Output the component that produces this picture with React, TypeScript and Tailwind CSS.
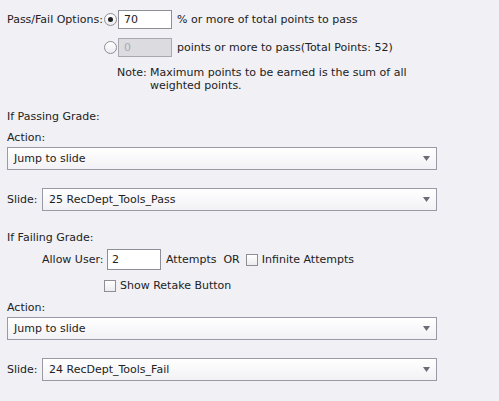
import React from "react";

const font = { fontFamily: '"DejaVu Sans", "Liberation Sans", sans-serif' };

function Radio({ checked }: { checked?: boolean }) {
  return (
    <span className="flex h-[13px] w-[13px] shrink-0 items-center justify-center rounded-full border border-[#8e8e96] bg-gradient-to-b from-white to-[#ececf0]">
      {checked && <span className="h-[5px] w-[5px] rounded-full bg-[#222]" />}
    </span>
  );
}

function Check() {
  return <span className="inline-block h-[12px] w-[12px] shrink-0 border border-[#8e8e96] bg-gradient-to-b from-white to-[#ececf0]" />;
}

function Select({ value, className }: { value: string; className?: string }) {
  return (
    <div className={`relative flex h-[23px] items-center border border-[#9a9aa6] bg-gradient-to-b from-white to-[#f2f2f6] pl-[6px] text-[#222] ${className ?? ""}`}>
      <span>{value}</span>
      <svg className="absolute right-[6px] top-[8px]" width="7" height="5" viewBox="0 0 7 5">
        <path d="M0 0 L7 0 L3.5 5 Z" fill="#6c6c78" />
      </svg>
    </div>
  );
}

export default function App() {
  return (
    <div className="h-[401px] w-[499px] overflow-hidden whitespace-nowrap bg-[#f0f0f5] text-[11px] leading-[13px] text-[#222]" style={font}>
      <div className="pt-[10px]">
        <div className="flex items-center">
          <span className="w-[104px] shrink-0 pl-[7px]">Pass/Fail Options:</span>
          <Radio checked />
          <span className="ml-[1px] flex h-[19px] w-[54px] items-center border border-[#8e8e96] bg-white pl-[5px]">70</span>
          <span className="ml-[5px]">% or more of total points to pass</span>
        </div>
        <div className="mt-[9px] flex items-center">
          <span className="w-[104px] shrink-0" />
          <Radio />
          <span className="ml-[1px] flex h-[19px] w-[54px] items-center border border-[#a8a8b0] bg-[#dcdce0] pl-[5px] text-[#a8a8b0]">0</span>
          <span className="ml-[5px]">points or more to pass(Total Points: 52)</span>
        </div>
        <div className="mt-[9px] flex pl-[117px]">
          <span className="w-[33px] shrink-0">Note:</span>
          <span className="w-[300px] whitespace-normal">Maximum points to be earned is the sum of all weighted points.</span>
        </div>
      </div>

      <div className="mt-[18px] pl-[7px]">If Passing Grade:</div>
      <div className="mt-[8px] pl-[7px]">Action:</div>
      <Select value="Jump to slide" className="ml-[7px] mt-[3px] w-[430px]" />
      <div className="mt-[18px] flex items-center pl-[7px]">
        <span className="w-[35px] shrink-0">Slide:</span>
        <Select value="25 RecDept_Tools_Pass" className="w-[395px]" />
      </div>

      <div className="mt-[20px] pl-[7px]">If Failing Grade:</div>
      <div className="mt-[5px] flex items-center pl-[42px]">
        <span className="w-[65px] shrink-0">Allow User:</span>
        <span className="flex h-[21px] w-[54px] items-center border border-[#8e8e96] bg-white pl-[4px]">2</span>
        <span className="ml-[5px]">Attempts&nbsp;&nbsp;OR</span>
        <span className="ml-[6px] flex items-center gap-[4px]">
          <Check />
          <span>Infinite Attempts</span>
        </span>
      </div>
      <div className="mt-[9px] flex items-center gap-[4px] pl-[104px]">
        <Check />
        <span>Show Retake Button</span>
      </div>
      <div className="mt-[9px] pl-[7px]">Action:</div>
      <Select value="Jump to slide" className="ml-[7px] mt-[3px] w-[430px]" />
      <div className="mt-[18px] flex items-center pl-[7px]">
        <span className="w-[35px] shrink-0">Slide:</span>
        <Select value="24 RecDept_Tools_Fail" className="w-[395px]" />
      </div>
    </div>
  );
}
